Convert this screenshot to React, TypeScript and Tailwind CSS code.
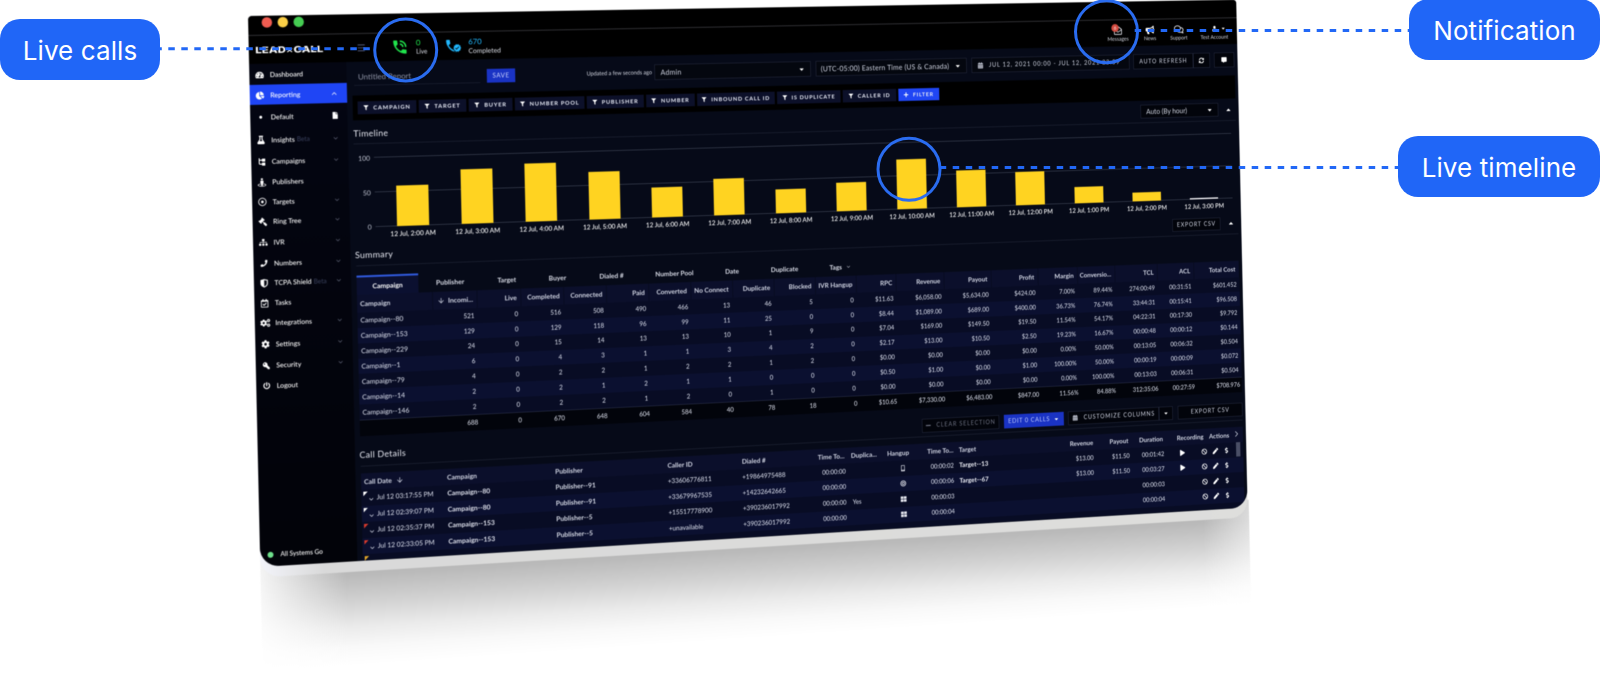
import React from 'react';
import {
  FaTachometerAlt,
  FaChartPie,
  FaFile,
  FaFlask,
  FaSitemap,
  FaPhone,
  FaRegCalendarCheck,
  FaCogs,
  FaCog,
  FaKey,
  FaPowerOff,
  FaFilter,
  FaPlus,
  FaMinus,
  FaBullhorn,
  FaRegComments,
  FaUser,
  FaCaretDown,
  FaCaretUp,
  FaCalendarAlt,
  FaSyncAlt,
  FaCommentAlt,
  FaPlay,
  FaBan,
  FaPen,
  FaDollarSign,
  FaRegDotCircle,
  FaGavel,
  FaStreetView,
  FaCircle,
  FaThLarge,
  FaMobileAlt,
  FaBullseye,
} from 'react-icons/fa';
import { MdPhoneInTalk, MdPhone, MdVerified } from 'react-icons/md';
import { ChevronDown, ChevronUp, ChevronRight, Menu, MailOpen, ArrowDown } from 'lucide-react';

const WIDTH = 2144;
const HEIGHT = 1102;

type Point = [number, number];

// Perspective transform that puts a WIDTH x HEIGHT box on four screen points
function quadTransform(p0: Point, p1: Point, p2: Point, p3: Point) {
  const dx1 = p1[0] - p2[0];
  const dx2 = p3[0] - p2[0];
  const sx = p0[0] - p1[0] + p2[0] - p3[0];
  const dy1 = p1[1] - p2[1];
  const dy2 = p3[1] - p2[1];
  const sy = p0[1] - p1[1] + p2[1] - p3[1];
  const det = dx1 * dy2 - dx2 * dy1;
  const g = (sx * dy2 - dx2 * sy) / det;
  const h = (dx1 * sy - sx * dy1) / det;
  const a = p1[0] - p0[0] + g * p1[0];
  const b = p3[0] - p0[0] + h * p3[0];
  const d = p1[1] - p0[1] + g * p1[1];
  const e = p3[1] - p0[1] + h * p3[1];
  const m = [
    a / WIDTH, d / WIDTH, 0, g / WIDTH,
    b / HEIGHT, e / HEIGHT, 0, h / HEIGHT,
    0, 0, 1, 0,
    p0[0], p0[1], 0, 1,
  ];
  return `matrix3d(${m.map((n) => n.toFixed(9)).join(',')})`;
}

const transform = quadTransform([248, 16], [1236, -0.3], [1247.5, 507.6], [260.3, 567]);

const BranchIcon = () => (
  <svg viewBox="0 0 16 16" className="w-4 h-4" fill="none" stroke="currentColor" strokeWidth="2">
    <path d="M3 1v10a2 2 0 0 0 2 2h4M3 5h6" />
    <rect x="9.5" y="3" width="4.5" height="4" fill="currentColor" />
    <rect x="9.5" y="11" width="4.5" height="4" fill="currentColor" />
  </svg>
);

const ShieldIcon = () => (
  <svg viewBox="0 0 16 18" className="w-[17px] h-[19px]" fill="currentColor">
    <path fillRule="evenodd" d="M1 2.5 8 1l7 1.5V9c0 4-3 6.500-7 8-4-1.500-7-4-7-8zM8 3v12c3-1.300 5-3 5-6V4z" />
  </svg>
);

const menu = [
  { label: 'Dashboard', icon: <FaTachometerAlt />, height: 'h-[42px]' },
  { label: 'Reporting', icon: <FaChartPie />, height: 'h-[40px]', active: true },
  { label: 'Default', icon: <FaCircle className="w-1.5 h-1.5" />, height: 'h-[48px]', file: true },
  { label: 'Insights', icon: <FaFlask />, height: 'h-[43px]', beta: true, arrow: true },
  { label: 'Campaigns', icon: <BranchIcon />, height: 'h-[43px]', arrow: true },
  { label: 'Publishers', icon: <FaStreetView />, height: 'h-[40px]' },
  { label: 'Targets', icon: <FaRegDotCircle />, height: 'h-[39px]', arrow: true },
  { label: 'Ring Tree', icon: <FaGavel className="-scale-x-100" />, height: 'h-[40px]', arrow: true },
  { label: 'IVR', icon: <FaSitemap />, height: 'h-[43px]', arrow: true },
  { label: 'Numbers', icon: <FaPhone className="w-3.5" />, height: 'h-[41px]', arrow: true },
  { label: 'TCPA Shield', icon: <ShieldIcon />, height: 'h-[38px]', beta: true, arrow: true },
  { label: 'Tasks', icon: <FaRegCalendarCheck />, height: 'h-[42px]' },
  { label: 'Integrations', icon: <FaCogs className="w-5 h-5" />, height: 'h-[38px]', arrow: true },
  { label: 'Settings', icon: <FaCog />, height: 'h-[47px]', arrow: true },
  { label: 'Security', icon: <FaKey className="-scale-x-100 w-3.5" />, height: 'h-[38px]', arrow: true },
  { label: 'Logout', icon: <FaPowerOff className="w-3.5" />, height: 'h-[43px]' },
];

const filters = [
  { label: 'CAMPAIGN', width: 'w-[120px]' },
  { label: 'TARGET', width: 'w-[98px]' },
  { label: 'BUYER', width: 'w-[91px]' },
  { label: 'NUMBER POOL', width: 'w-[146px]' },
  { label: 'PUBLISHER', width: 'w-[121px]' },
  { label: 'NUMBER', width: 'w-[104px]' },
  { label: 'INBOUND CALL ID', width: 'w-[168px]' },
  { label: 'IS DUPLICATE', width: 'w-[139px]' },
  { label: 'CALLER ID', width: 'w-[118px]' },
];

// height is in pixels, 141 is the "100" line
const bars = [
  { label: '2:00 AM', height: 82 },
  { label: '3:00 AM', height: 111 },
  { label: '4:00 AM', height: 119 },
  { label: '5:00 AM', height: 98 },
  { label: '6:00 AM', height: 62 },
  { label: '7:00 AM', height: 76 },
  { label: '8:00 AM', height: 50 },
  { label: '9:00 AM', height: 60 },
  { label: '10:00 AM', height: 105 },
  { label: '11:00 AM', height: 78 },
  { label: '12:00 PM', height: 71 },
  { label: '1:00 PM', height: 35 },
  { label: '2:00 PM', height: 19 },
  { label: '3:00 PM', height: 3 },
];

const tabs = [
  { label: 'Campaign', width: 'w-[126px]' },
  { label: 'Publisher', width: 'w-[131px]' },
  { label: 'Target', width: 'w-[104px]' },
  { label: 'Buyer', width: 'w-[108px]' },
  { label: 'Dialed #', width: 'w-[120px]' },
  { label: 'Number Pool', width: 'w-[148px]' },
  { label: 'Date', width: 'w-[100px]' },
  { label: 'Duplicate', width: 'w-[128px]' },
  { label: 'Tags', width: 'w-[116px]' },
];

const summaryHead = [
  'Campaign', 'Incomi...', 'Live', 'Completed', 'Connected', 'Paid', 'Converted', 'No Connect', 'Duplicate', 'Blocked',
  'IVR Hangup', 'RPC', 'Revenue', 'Payout', 'Profit', 'Margin', 'Conversio...', 'TCL', 'ACL', 'Total Cost',
];

const summaryRows = [
  ['Campaign--80', '521', '0', '516', '508', '490', '466', '13', '46', '5', '0', '$11.63', '$6,058.00', '$5,634.00', '$424.00', '7.00%', '89.44%', '274:00:49', '00:31:51', '$601.452'],
  ['Campaign--153', '129', '0', '129', '118', '96', '99', '11', '25', '0', '0', '$8.44', '$1,089.00', '$689.00', '$400.00', '36.73%', '76.74%', '33:44:31', '00:15:41', '$96.508'],
  ['Campaign--229', '24', '0', '15', '14', '13', '13', '10', '1', '9', '0', '$7.04', '$169.00', '$149.50', '$19.50', '11.54%', '54.17%', '04:22:31', '00:17:30', '$9.792'],
  ['Campaign--1', '6', '0', '4', '3', '1', '1', '3', '4', '2', '0', '$2.17', '$13.00', '$10.50', '$2.50', '19.23%', '16.67%', '00:00:48', '00:00:12', '$0.144'],
  ['Campaign--79', '4', '0', '2', '2', '1', '2', '2', '1', '2', '0', '$0.00', '$0.00', '$0.00', '$0.00', '0.00%', '50.00%', '00:13:05', '00:06:32', '$0.504'],
  ['Campaign--14', '2', '0', '2', '1', '2', '1', '1', '0', '0', '0', '$0.50', '$1.00', '$0.00', '$1.00', '100.00%', '50.00%', '00:00:19', '00:00:09', '$0.072'],
  ['Campaign--146', '2', '0', '2', '2', '1', '2', '0', '1', '0', '0', '$0.00', '$0.00', '$0.00', '$0.00', '0.00%', '100.00%', '00:13:03', '00:06:31', '$0.504'],
];

const totals = ['', '688', '0', '670', '648', '604', '584', '40', '78', '18', '0', '$10.65', '$7,330.00', '$6,483.00', '$847.00', '11.56%', '84.88%', '312:35:06', '00:27:59', '$708.976'];

const calls = [
  { flag: 'bg-white', date: 'Jul 12 03:17:55 PM', campaign: 'Campaign--80', publisher: 'Publisher--91', caller: '+33606776811', dialed: '+19864975488', time: '00:00:00', dup: '', hangup: <FaMobileAlt />, connect: '00:00:02', target: 'Target--13', revenue: '$13.00', payout: '$11.50', duration: '00:01:42', rec: true },
  { flag: 'bg-white', date: 'Jul 12 02:39:07 PM', campaign: 'Campaign--80', publisher: 'Publisher--91', caller: '+33679967535', dialed: '+14232642665', time: '00:00:00', dup: '', hangup: <FaBullseye />, connect: '00:00:06', target: 'Target--67', revenue: '$13.00', payout: '$11.50', duration: '00:03:27', rec: true },
  { flag: 'bg-[#d83a2c]', date: 'Jul 12 02:35:37 PM', campaign: 'Campaign--153', publisher: 'Publisher--5', caller: '+15517778900', dialed: '+390236017992', time: '00:00:00', dup: 'Yes', hangup: <FaThLarge />, connect: '00:00:03', target: '', revenue: '', payout: '', duration: '00:00:03', rec: false },
  { flag: 'bg-[#d83a2c]', date: 'Jul 12 02:33:05 PM', campaign: 'Campaign--153', publisher: 'Publisher--5', caller: '+unavailable', dialed: '+390236017992', time: '00:00:00', dup: '', hangup: <FaThLarge />, connect: '00:00:04', target: '', revenue: '', payout: '', duration: '00:00:04', rec: false },
];

const summaryGrid = 'grid grid-cols-[155px_92px_91px_90px_90px_90px_90px_90px_90px_90px_90px_88px_107px_106px_106px_90px_86px_98px_85px_106px]';
const callGrid = 'grid grid-cols-[166px_227px_238px_160px_159px_81px_80px_84px_74px_238px_83px_81px_82px_90px_62px_25px]';
const outlineButton = 'flex items-center justify-center border border-[#262b40] bg-[#02040b] text-[12.5px] tracking-[1.7px] text-[#ccd0de]';

function Sidebar() {
  return (
    <aside className="w-[196px] shrink-0 bg-gradient-to-b from-[#040612] to-[#020309] flex flex-col text-sm font-medium text-white">
      {menu.map((item) => (
        <div
          key={item.label}
          className={`${item.height} pt-0.5 flex items-center shrink-0 ${item.active ? 'bg-[#1f45f5]' : ''}`}
        >
          <span className="w-[41px] flex justify-center text-[17px] text-white">{item.icon}</span>
          <span>{item.label}</span>
          {item.beta && <span className="ml-1 text-[13px] text-[#363d58]">Beta</span>}
          <span className="ml-auto mr-[18px] text-[#5d6274]">
            {item.active && <ChevronUp className="w-4 h-4 text-white" />}
            {item.arrow && <ChevronDown className="w-3.5 h-3.5" />}
            {item.file && <FaFile className="w-3.5 h-3.5 text-white" />}
          </span>
        </div>
      ))}
      <div className="mt-auto mb-3.5 flex items-center text-[13px]">
        <span className="ml-[15px] mr-3.5 w-[12px] h-[12px] rounded-full bg-[#6fe08c]" />
        All Systems Go
      </div>
    </aside>
  );
}

function Header() {
  return (
    <header className="h-[58px] shrink-0 bg-black flex items-center border-t-2 border-[#2e2e32] text-[#dcdfe8]">
      <div className="w-[137px] ml-[13px] text-white">
        <div className="w-max origin-left scale-x-[1.28] font-['Inter'] text-[18px] font-extrabold leading-none pt-0.5">
          LEAD<span className="text-[14px]">✕</span>CALL
        </div>
      </div>
      <Menu className="ml-[67px] w-5 h-5 text-[#5a6284]" />
      <MdPhoneInTalk className="ml-[51px] w-[36px] h-[36px] text-[#20e44c]" />
      <div className="ml-[15px] w-[58px] text-[13px] leading-[19px]">
        <div className="text-[16px] text-[#20e44c]">0</div>
        <div>Live</div>
      </div>
      <div className="relative w-[44px] text-[#21b9ff]">
        <MdPhone className="w-[34px] h-[34px]" />
        <MdVerified className="absolute left-[18px] top-[12px] w-[18px] h-[18px] rounded-full bg-black" />
      </div>
      <div className="ml-[6px] text-[14px] leading-[19px]">
        <div className="text-[16px] text-[#21b9ff]">670</div>
        <div>Completed</div>
      </div>
      <div className="ml-auto flex text-center text-[11.5px] leading-[16px] text-[#cfd2dc] pt-1">
        <div className="relative w-[74px] flex flex-col items-center">
          <MailOpen className="w-[22px] h-[20px] text-[#e5e7ee]" />
          <span className="absolute left-[22px] -top-1 w-[17px] h-[17px] rounded-full bg-[#d24b40] text-white text-[10px] leading-[17px]">6</span>
          <span>Messages</span>
        </div>
        <div className="w-[74px] flex flex-col items-center">
          <FaBullhorn className="w-[20px] h-[20px] text-white" />
          <span>News</span>
        </div>
        <div className="w-[60px] flex flex-col items-center">
          <FaRegComments className="w-[22px] h-[20px] text-[#e5e7ee]" />
          <span>Support</span>
        </div>
        <div className="w-[106px] flex flex-col items-center">
          <span className="flex items-center h-[20px] pl-5 text-white">
            <FaUser className="w-[15px]" />
            <FaCaretDown className="ml-1.5 w-[14px]" />
          </span>
          <span>Test Account</span>
        </div>
      </div>
    </header>
  );
}

function Toolbar() {
  return (
    <div className="h-[68px] flex items-center pr-px text-[15px] tracking-[0.4px] text-[#ccd0de]">
      <div className="ml-[4px] w-[259px] h-[28px] border-b border-[#222738] px-2 text-[16px] tracking-normal leading-[20px] text-[#8d92a4]">
        Untitled Report
      </div>
      <button className="ml-[14px] w-[59px] h-[28px] bg-[#1a33c4] text-[13px] tracking-[1px] text-[#cbd3ff]">SAVE</button>
      <span className="ml-[150px] w-[144px] text-[12px] tracking-normal whitespace-nowrap text-[#dadde8]">
        <span className="inline-block origin-left scale-x-[0.96]">Updated a few seconds ago</span>
      </span>
      <div className="w-[338px] h-[32px] px-3 border border-[#262b40] bg-[#04070f] flex items-center justify-between">
        Admin <FaCaretDown className="text-white w-3.5" />
      </div>
      <div className="ml-[11px] w-[335px] h-[32px] pl-2.5 pr-3 border border-[#262b40] bg-[#04070f] flex items-center justify-between whitespace-nowrap">
        (UTC-05:00) Eastern Time (US &amp; Canada) <FaCaretDown className="text-white w-3.5" />
      </div>
      <div className="ml-[11px] w-[360px] h-[32px] px-3 border border-[#262b40] bg-[#04070f] flex items-center text-[13px] tracking-[1.6px] whitespace-nowrap">
        <FaCalendarAlt className="mr-3 w-3.5" /> JUL 12, 2021 00:00 - JUL 12, 2021 23:59
      </div>
      <div className={`${outlineButton} ml-auto w-[139px] h-[32px] whitespace-nowrap`}>AUTO REFRESH</div>
      <div className={`${outlineButton} w-[39px] h-[32px]`}>
        <FaSyncAlt className="text-white" />
      </div>
      <div className={`${outlineButton} ml-[10px] w-[47px] h-[32px]`}>
        <FaCommentAlt className="text-white" />
      </div>
    </div>
  );
}

function Timeline() {
  return (
    <section>
      <div className="h-[48px] flex items-center border-b border-[#252b3d]">
        <h2 className="mt-1.5 text-[18px] tracking-[0.5px] text-[#e6e8f1]">Timeline</h2>
        <div className="ml-auto w-[181px] h-[29px] px-3 border border-[#262b40] bg-[#02040b] flex items-center justify-between text-[15px] text-[#ccd0dc]">
          Auto (By hour) <FaCaretDown className="text-white w-3.5" />
        </div>
        <FaCaretUp className="ml-[16px] mr-[9px] w-[16px] h-[16px] text-white" />
      </div>
      <div className="h-[199px] pt-[27px] pr-[12px]">
        <div className="flex h-[141px]">
          <div className="w-[33px] -mt-2 -mb-2.5 flex flex-col justify-between text-right text-sm leading-5 text-[#bcc0ce]">
            <span>100</span>
            <span>50</span>
            <span>0</span>
          </div>
          <div className="relative ml-2 flex-1 pl-[10px] flex">
            <div className="absolute inset-0 flex flex-col justify-between">
              <div className="h-px bg-[#4c5264]" />
              <div className="h-px bg-[#4c5264]" />
              <div className="h-px bg-[#4c5264]" />
            </div>
            {bars.map((bar, i) => (
              <div key={i} className="relative flex-1 flex items-end justify-center">
                <div className={`w-[66px] ${bar.height < 5 ? 'bg-[#e8e8ec]' : 'bg-[#ffd321]'}`} style={{ height: bar.height }} />
              </div>
            ))}
          </div>
        </div>
        <div className="flex ml-[51px] mt-[5px] text-center text-[13.5px] leading-5 font-medium text-white">
          {bars.map((bar, i) => (
            <span key={i} className="flex-1 whitespace-nowrap">12 Jul, {bar.label}</span>
          ))}
        </div>
      </div>
    </section>
  );
}

function Summary() {
  return (
    <section>
      <div className="h-[47px] flex items-center border-b border-[#252b3d]">
        <h2 className="-ml-0.5 mt-0.5 text-[18px] tracking-[0.5px] text-[#e6e8f1]">Summary</h2>
        <div className={`${outlineButton} ml-auto w-[112px] h-[27px]`}>EXPORT CSV</div>
        <FaCaretUp className="ml-[17px] mr-[9px] w-[16px] h-[16px] text-white" />
      </div>
      <div className="mt-[19px] h-[39px] flex text-sm font-bold text-[#d6d9e4]">
        {tabs.map((tab, i) => (
          <div
            key={tab.label}
            className={`${tab.width} flex items-center justify-center ${i === 0 ? 'border-t-4 border-[#2f58d8] bg-[#0b1030] text-white' : ''}`}
          >
            {tab.label}
            {tab.label === 'Tags' && <ChevronDown className="ml-2 w-3 h-3" />}
          </div>
        ))}
      </div>
      <div className={`${summaryGrid} h-[36px] items-stretch bg-[#0b0f2b] text-sm font-bold text-[#d0d4e2]`}>
        {summaryHead.map((head, i) => (
          <div key={head} className={`flex items-center whitespace-nowrap border-r border-[#050817] ${i === 0 ? 'pl-1.5' : 'justify-end pr-2'}`}>
            {i === 1 && <ArrowDown className="mr-1.5 w-4 h-4" />}
            {head}
          </div>
        ))}
      </div>
      <div className="text-[13px] text-[#dfe3f0]">
        {summaryRows.map((row, r) => (
          <div key={row[0]} className={`${summaryGrid} h-[30.86px] items-center ${r % 2 ? 'bg-[#0b1030]' : 'bg-[#080c24]'}`}>
            {row.map((cell, i) => (
              <div key={i} className={i === 0 ? 'pl-1.5 text-sm' : 'text-right pr-[7px]'}>{cell}</div>
            ))}
          </div>
        ))}
        <div className={`${summaryGrid} h-[33px] items-center border-t border-[#2e3450] bg-[#02040b]`}>
          {totals.map((cell, i) => (
            <div key={i} className="text-right pr-1">{cell}</div>
          ))}
        </div>
      </div>
    </section>
  );
}

function CallDetails() {
  return (
    <section className="mt-[14px]">
      <div className="h-[47px] flex items-center border-b border-[#252b3d]">
        <h2 className="-ml-0.5 text-[18px] tracking-[0.5px] text-[#e6e8f1]">Call Details</h2>
        <div className={`${outlineButton} ml-auto w-[173px] h-[29px] !text-[#6c7080] whitespace-nowrap`}>
          <FaMinus className="mr-3 w-3" /> CLEAR SELECTION
        </div>
        <div className="ml-[11px] w-[136px] h-[29px] flex items-center justify-center bg-[#1a33c4] text-[13px] tracking-[1.2px] text-[#bcc8ff] whitespace-nowrap">
          EDIT 0 CALLS <FaCaretDown className="ml-2 w-3.5 text-white" />
        </div>
        <div className={`${outlineButton} ml-[10px] w-[209px] h-[29px] whitespace-nowrap`}>
          <FaCalendarAlt className="mr-3 w-3.5" /> CUSTOMIZE COLUMNS
        </div>
        <div className={`${outlineButton} w-[32px] h-[29px]`}>
          <FaCaretDown className="text-white" />
        </div>
        <div className={`${outlineButton} ml-[12px] w-[151px] h-[29px]`}>EXPORT CSV</div>
      </div>
      <div className={`${callGrid} mt-[14px] h-[33px] items-center bg-[#0b0f2b] text-sm font-bold text-[#d0d4e2] whitespace-nowrap`}>
        <div className="pl-1.5 flex items-center">Call Date <ArrowDown className="ml-2 w-4 h-4" /></div>
        <div className="pl-2.5">Campaign</div>
        <div className="pl-2">Publisher</div>
        <div className="pl-2">Caller ID</div>
        <div className="pl-2">Dialed #</div>
        <div className="text-right pr-2">Time To...</div>
        <div className="pl-1.5">Duplica...</div>
        <div className="pl-1.5">Hangup</div>
        <div className="text-right pr-1">Time To...</div>
        <div className="pl-2">Target</div>
        <div className="text-right pr-2">Revenue</div>
        <div className="text-right pr-2">Payout</div>
        <div className="text-right pr-2.5">Duration</div>
        <div className="pl-[22px]">Recording</div>
        <div className="text-center">Actions</div>
        <ChevronRight className="w-5 h-5 -mt-1" />
      </div>
      <div className="relative text-[13px] text-[#dfe3f0]">
        {calls.map((call, r) => (
          <div key={r} className={`${callGrid} h-[32.5px] items-center whitespace-nowrap ${r % 2 ? 'bg-[#0b1030]' : 'bg-[#080c24]'}`}>
            <div className="h-full pl-1 flex items-center">
              <span className={`w-[9px] h-[9px] self-start mt-1 ${call.flag} [clip-path:polygon(0_0,100%_0,0_100%)]`} />
              <ChevronDown className="mr-1 mt-2 w-3.5 h-3.5" />
              <span className="text-[13.5px]">{call.date}</span>
            </div>
            <div className="pl-2.5 text-sm font-bold text-[#dde0eb]">{call.campaign}</div>
            <div className="pl-2 text-sm font-bold text-[#d4d8e4]">{call.publisher}</div>
            <div className="pl-2 text-[13.5px]">{call.caller}</div>
            <div className="pl-2 text-[13.5px]">{call.dialed}</div>
            <div className="text-right pr-1.5">{call.time}</div>
            <div className="pl-2">{call.dup}</div>
            <div className="flex justify-center pr-1 text-[13px] text-[#e4e6ee]">{call.hangup}</div>
            <div className="text-right pr-1">{call.connect}</div>
            <div className="pl-2 text-sm font-bold text-[#eceef5]">{call.target}</div>
            <div className="text-right pr-2">{call.revenue}</div>
            <div className="text-right pr-1.5">{call.payout}</div>
            <div className="text-right pr-2">{call.duration}</div>
            <div className="pl-[28px] text-white">{call.rec && <FaPlay />}</div>
            <div className="flex items-center justify-end gap-[13px] pr-2 text-[13px] text-white">
              <FaBan className="shrink-0" />
              <FaPen className="shrink-0" />
              <FaDollarSign className="shrink-0" />
            </div>
            <div />
          </div>
        ))}
        <div className="h-3 pl-1 pt-1 bg-[#080c24]">
          <div className="w-[9px] h-[9px] bg-[#e0a528] [clip-path:polygon(0_0,100%_0,0_100%)]" />
        </div>
        <div className="absolute right-[7px] top-0 w-[10px] h-[31px] bg-[#4a4f66]" />
      </div>
    </section>
  );
}

function DashboardWindow() {
  return (
    <div className="absolute left-0 top-0 w-[2144px] h-[1102px] origin-top-left will-change-transform font-['Lato',sans-serif]" style={{ transform }}>
      <div className="relative h-full blur-[1.1px]">
        {/* Shadow and bottom edge */}
        <div className="absolute left-0 top-[1085px] w-[2147px] h-[225px] bg-[linear-gradient(to_bottom,#b0b0b0,#bababa_20%,#d0d0d0_42%,#ebebeb_66%,#f9f9f9_84%,#ffffff)] [mask-image:linear-gradient(to_right,rgba(0,0,0,0.15),black_8%,black_95%,rgba(0,0,0,0.5))]" />
        <div className="absolute inset-x-0 bottom-[-21px] h-[100px] rounded-b-[40px] bg-gradient-to-r from-[#f3f4fa] via-[#d9d9d9] via-6% to-[#dededc]" />

        <div className="relative h-full flex flex-col overflow-hidden rounded-t-[8px] rounded-b-[38px] bg-[#060a18]">
          <div className="h-[38px] shrink-0 bg-black flex items-start gap-[11px] pl-[27px] pt-[3px]">
            <span className="w-[21px] h-[21px] rounded-full bg-[#f05c51]" />
            <span className="w-[21px] h-[21px] rounded-full bg-[#fbcf47]" />
            <span className="w-[21px] h-[21px] rounded-full bg-[#45cd52]" />
          </div>
          <Header />
          <div className="flex-1 flex min-h-0">
            <Sidebar />
            <main className="flex-1 pl-[11px] pr-[7px] overflow-hidden bg-[#060a18]">
              <Toolbar />
              <div className="h-[50px] pl-[10px] flex items-center gap-[5px] bg-black text-xs font-bold tracking-[1.5px] text-[#e6e9f4]">
                {filters.map((filter) => (
                  <div key={filter.label} className={`${filter.width} h-[26px] flex items-center justify-center whitespace-nowrap bg-[#0c1029]`}>
                    <FaFilter className="mr-2.5 w-2.5 text-white" /> {filter.label}
                  </div>
                ))}
                <div className="w-[91px] h-[26px] flex items-center justify-center bg-[#2046f4]">
                  <FaPlus className="mr-2.5 w-2.5 text-white" /> FILTER
                </div>
              </div>
              <Timeline />
              <Summary />
              <CallDetails />
            </main>
          </div>
        </div>
      </div>
    </div>
  );
}

function Callouts() {
  const label = "absolute h-[61px] pt-px rounded-[20px] bg-[#2066f7] flex items-center justify-center text-white text-[26px] tracking-[0.1px] font-['Inter',sans-serif] whitespace-nowrap";
  return (
    <>
      <svg className="absolute inset-0 w-full h-full" fill="none" stroke="#2a6cf0" strokeWidth="3">
        <circle cx="405.7" cy="50" r="31" />
        <circle cx="1106.5" cy="31.7" r="31" />
        <circle cx="909" cy="169.3" r="31" />
        <g stroke="#2268f6" strokeDasharray="6.5 6.5">
          <path d="M155.3 48.7H375" />
          <path d="M1134.7 30.5H1410" />
          <path d="M939.7 167.5H1399" />
        </g>
      </svg>
      <div className={`${label} left-0 top-[19px] w-[160px]`}>Live calls</div>
      <div className={`${label} right-0 -top-px w-[191px]`}>Notification</div>
      <div className={`${label} right-0 top-[136px] w-[202px]`}>Live timeline</div>
    </>
  );
}

export default function App() {
  return (
    <div className="relative w-[1600px] h-[675px] overflow-hidden bg-white">
      <DashboardWindow />
      <Callouts />
    </div>
  );
}
